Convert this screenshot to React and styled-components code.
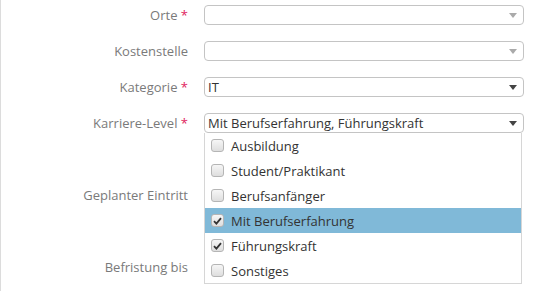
import React from "react"
import styled, { createGlobalStyle } from "styled-components"

const levels = [
  { label: "Ausbildung", checked: false },
  { label: "Student/Praktikant", checked: false },
  { label: "Berufsanfänger", checked: false },
  { label: "Mit Berufserfahrung", checked: true, active: true },
  { label: "Führungskraft", checked: true },
  { label: "Sonstiges", checked: false },
]

const Caret = ({ dark }) => (
  <Arrow viewBox="0 0 8 5" dark={dark ? 1 : 0}>
    <path d="M0 0 H8 L4 5 Z" />
  </Arrow>
)

const Check = () => (
  <svg width="9" height="8" viewBox="0 0 9 8">
    <path d="M1 4.2 L3.4 6.6 L8 1.2" fill="none" stroke="#333" strokeWidth="1.8" />
  </svg>
)

const App = () => {
  return (
    <Page>
      <GlobalStyle />
      <Form>
        <Row>
          <Label>Orte <Req>*</Req></Label>
          <Select>
            <Value />
            <Caret />
          </Select>
        </Row>
        <Row>
          <Label>Kostenstelle</Label>
          <Select>
            <Value />
            <Caret />
          </Select>
        </Row>
        <Row>
          <Label>Kategorie <Req>*</Req></Label>
          <Select>
            <Value>IT</Value>
            <Caret dark />
          </Select>
        </Row>
        <Row>
          <Label>Karriere-Level <Req>*</Req></Label>
          <Select>
            <Value>Mit Berufserfahrung, Führungskraft</Value>
            <Caret dark />
            <Menu>
              {levels.map(item => (
                <Option key={item.label} active={item.active ? 1 : 0}>
                  <Box>{item.checked && <Check />}</Box>
                  {item.label}
                </Option>
              ))}
            </Menu>
          </Select>
        </Row>
        <Row>
          <Label />
        </Row>
        <Row>
          <Label>Geplanter Eintritt</Label>
        </Row>
        <Row>
          <Label />
        </Row>
        <Row>
          <Label>Befristung bis</Label>
        </Row>
      </Form>
    </Page>
  )
}

const GlobalStyle = createGlobalStyle`
  *, *::before, *::after {
    box-sizing: border-box;
  }
  body {
    margin: 0;
    background: #fff;
    font-family: "Open Sans", "DejaVu Sans", sans-serif;
    font-size: 13px;
  }
`

const Page = styled.div`
  height: 291px;
  border-left: 1px solid #dcdcdc;
  overflow: hidden;
`

const Form = styled.div`
  display: flex;
  flex-direction: column;
  gap: 16px;
  padding-top: 5px;
`

const Row = styled.div`
  display: grid;
  grid-template-columns: 187px 320px;
  column-gap: 16px;
  height: 20px;
  align-items: center;
`

const Label = styled.div`
  text-align: right;
  color: #7a7a7a;
  white-space: nowrap;
  line-height: 20px;
`

const Req = styled.span`
  color: #e0245e;
`

const Select = styled.div`
  position: relative;
  display: flex;
  align-items: center;
  height: 20px;
  border: 1px solid #c4c4c4;
  border-radius: 4px;
  padding: 0 6px 0 3px;
  background: #fff;
`

const Value = styled.div`
  flex: 1;
  color: #333;
  white-space: nowrap;
  line-height: 18px;
`

const Arrow = styled.svg`
  width: 8px;
  height: 5px;
  fill: ${({ dark }) => (dark ? "#444" : "#aaa")};
`

const Menu = styled.div`
  position: absolute;
  top: 19px;
  left: -1px;
  width: 318px;
  border: 1px solid #d6d6d6;
  border-top: none;
  background: #fff;
  z-index: 10;
`

const Option = styled.div`
  display: flex;
  align-items: center;
  gap: 7px;
  height: 25px;
  padding-left: 6px;
  color: #333;
  background: ${({ active }) => (active ? "#80b9d8" : "transparent")};
`

const Box = styled.span`
  display: flex;
  align-items: center;
  justify-content: center;
  width: 13px;
  height: 13px;
  border: 1px solid #b5b5b5;
  border-radius: 3px;
  background: linear-gradient(#f6f6f6, #dedede);
`

export default App
